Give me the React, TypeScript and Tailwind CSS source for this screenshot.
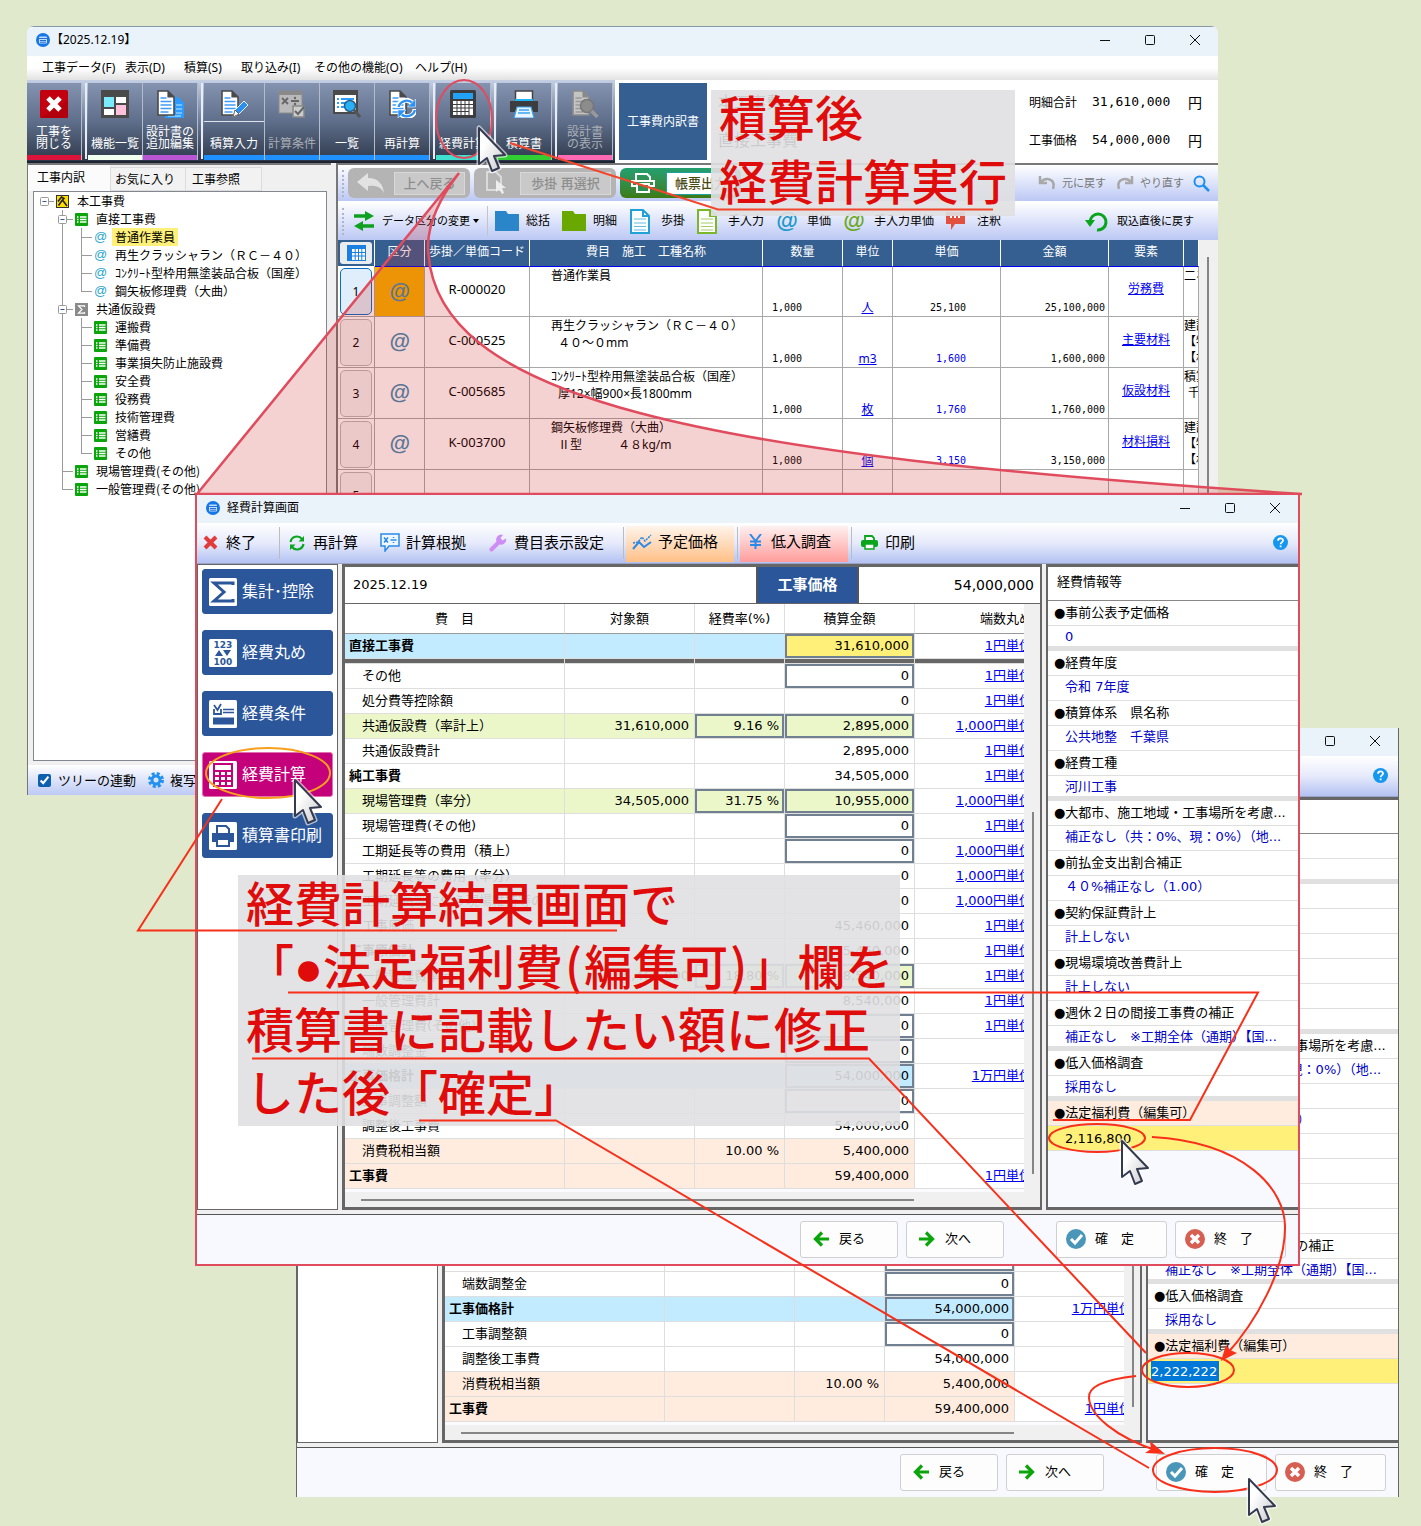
import React, { type ReactNode } from "react";

/* ---------- shared pieces ---------- */

function WindowControls() {
  return (
    <div className="mr-px ml-auto flex h-full">
      <button aria-label="最小化" className="flex w-[45px] items-center justify-center">
        <svg width="12" height="12" viewBox="0 0 12 12" stroke="#111" fill="none"><path d="M1 6.5h10" /></svg>
      </button>
      <button aria-label="最大化" className="flex w-[45px] items-center justify-center">
        <svg width="12" height="12" viewBox="0 0 12 12" stroke="#111" fill="none"><rect x="1.5" y="1.5" width="9" height="9" rx="1" /></svg>
      </button>
      <button aria-label="閉じる" className="flex w-[45px] items-center justify-center">
        <svg width="12" height="12" viewBox="0 0 12 12" stroke="#111" fill="none"><path d="M1 1l10 10M11 1L1 11" /></svg>
      </button>
    </div>
  );
}

function AppIcon() {
  return (
    <svg width="14" height="14" viewBox="0 0 14 14">
      <circle cx="7" cy="7" r="7" fill="#1676e8" />
      <rect x="3" y="3.5" width="8" height="7" rx="1" fill="#bfe0ff" />
      <path d="M3 5.5h8M4 7.5h6M4 9.2h6" stroke="#1660c8" strokeWidth=".9" />
    </svg>
  );
}

function Cursor({ x, y }: { x: number; y: number }) {
  return (
    <g transform={`translate(${x} ${y})`}>
      <path d="M0 0L0 36L8 30L13 43L20 40L15 28L26 27Z" fill="none" stroke="#ffffff" strokeOpacity=".6" strokeWidth="5" strokeLinejoin="round" />
      <path d="M0 0L0 36L8 30L13 43L20 40L15 28L26 27Z" fill="url(#cursorFill)" stroke="#343a50" strokeWidth="2" strokeLinejoin="round" />
    </g>
  );
}

/* ---------- main window: toolbar icons ---------- */

const IconClose = () => (
  <svg width="28" height="28" viewBox="0 0 28 28">
    <rect width="28" height="28" rx="1.5" fill="#c30010" />
    <path d="M0 28h28V10z" fill="#a8000c" opacity=".6" />
    <path d="M8 8l12 12M20 8L8 20" stroke="#fff" strokeWidth="5" />
  </svg>
);
const IconPanels = () => (
  <svg width="28" height="28" viewBox="0 0 28 28">
    <rect width="28" height="28" fill="#4a4a4a" />
    <rect x="3" y="7" width="10" height="10" fill="#7aeaff" />
    <rect x="15" y="7" width="10" height="6" fill="#fff" />
    <rect x="3" y="19" width="10" height="6" fill="#fff" />
    <rect x="15" y="15" width="10" height="10" fill="#ffc0da" />
  </svg>
);
const Page = ({ fill = "#fff", stroke = "#4a4a4a", line = "#3f9cf5" }: { fill?: string; stroke?: string; line?: string }) => (
  <g>
    <path d="M2 1h10l6 6v18H2z" fill={fill} stroke={stroke} strokeWidth="1.6" />
    <path d="M12 1v6h6" fill={stroke} stroke={stroke} strokeWidth="1.2" />
    <path d="M4.500 8h6M4.500 11.500h11M4.500 15h11M4.500 18.500h11M4.500 22h8" stroke={line} strokeWidth="1.4" />
  </g>
);
const IconPages = () => (
  <svg width="28" height="28" viewBox="0 0 28 28">
    <path d="M12 7h10l6 6v15H9V24h9V7z" fill="#2b9bff" />
    <path d="M20 15h6M20 19h6M12 26h13M20 23h6" stroke="#8fd0ff" strokeWidth="1.300" />
    <Page />
  </svg>
);
const IconPen = () => (
  <svg width="28" height="28" viewBox="0 0 28 28">
    <Page />
    <path d="M13 27l2-7L24 11l4 4-9 9z" fill="#2a8ff0" stroke="#e8f3ff" strokeWidth="1" />
    <path d="M13 27l2-7 4 4z" fill="#fff" stroke="#444" strokeWidth=".8" />
  </svg>
);
const IconCond = () => (
  <svg width="28" height="28" viewBox="0 0 28 28">
    <rect x="1" y="1" width="23" height="22" fill="#b9b9b9" stroke="#8c8c8c" />
    <rect x="1" y="1" width="23" height="4" fill="#8a8a8a" />
    <path d="M4 8l6 6M10 8l-6 6M13 11h8" stroke="#666" strokeWidth="1.800" />
    <circle cx="17" cy="8" r="1.200" fill="#666" /><circle cx="17" cy="14" r="1.200" fill="#666" />
    <rect x="15" y="16" width="11" height="11" fill="#ccc" stroke="#888" strokeWidth="1.500" />
    <path d="M17 21l3 3 6-7" fill="none" stroke="#666" strokeWidth="2" />
  </svg>
);
const IconSearchList = () => (
  <svg width="28" height="28" viewBox="0 0 28 28">
    <rect x="1" y="1" width="23" height="22" fill="#fff" stroke="#4a4a4a" strokeWidth="2" />
    <rect x="0" y="0" width="25" height="5" fill="#4a4a4a" />
    <path d="M4 9h2M4 13h2M4 17h2M8 9h13M8 13h6M8 17h5" stroke="#2b9bff" strokeWidth="2" />
    <circle cx="17" cy="16" r="5.500" fill="#29b0f5" stroke="#2a5e88" strokeWidth="1.500" />
    <path d="M21 20l6 7" stroke="#555" strokeWidth="3" />
  </svg>
);
const IconRecalc = () => (
  <svg width="28" height="28" viewBox="0 0 28 28">
    <Page />
    <path d="M10 18a8 8 0 0 1 14-5M27 19a8 8 0 0 1-14 5" fill="none" stroke="#ffffff" strokeWidth="5" />
    <path d="M10.500 17a8.500 8.500 0 0 1 14-4M27 20a8.500 8.500 0 0 1-14 4" fill="none" stroke="#2b93f5" strokeWidth="2.400" />
    <path d="M27.500 9v8h-8zM10 28v-8h8z" fill="#2b93f5" stroke="#dff0ff" strokeWidth=".6" />
  </svg>
);
const IconCalc = () => (
  <svg width="26" height="28" viewBox="0 0 26 28">
    <rect width="26" height="28" rx="1.500" fill="#3d3d40" />
    <rect x="3" y="3" width="20" height="6" fill="#22a2f5" />
    <rect x="3" y="11" width="20" height="14" fill="#fff" />
    <path d="M3 14.500h20M3 18h20M3 21.500h16M7 11v14M11 11v14M15 11v14M19 11v14" stroke="#3d3d40" strokeWidth="1" />
  </svg>
);
const IconPrinter = () => (
  <svg width="28" height="28" viewBox="0 0 28 28">
    <rect x="5.500" y="1" width="17" height="10" fill="#fff" stroke="#444" strokeWidth="1.500" />
    <rect x="5" y="9" width="18" height="3" fill="#1fb6f5" />
    <path d="M0 11h28v11h-5l-2-5H7l-2 5H0z" fill="#3d3d40" />
    <path d="M7 17h14l3 11H4z" fill="#eaf5ff" stroke="#38a2f0" strokeWidth="1.200" />
    <path d="M9 20h10M8 23h12" stroke="#38a2f0" strokeWidth="1.300" />
  </svg>
);
const IconPreview = () => (
  <svg width="28" height="28" viewBox="0 0 28 28">
    <Page fill="#c4c4c4" stroke="#8a8a8a" line="#999" />
    <circle cx="16" cy="16" r="6.500" fill="#8c8c8c" stroke="#777" strokeWidth="1.500" />
    <path d="M20.500 21l6 6" stroke="#999" strokeWidth="3.500" />
  </svg>
);

type Tool = { label: string[]; icon: ReactNode; bar: string; wide?: boolean; off?: boolean };
const toolGroups: Tool[][] = [
  [{ label: ["工事を", "閉じる"], icon: <IconClose />, bar: "bg-[#dc143c]" }],
  [
    { label: ["機能一覧"], icon: <IconPanels />, bar: "bg-[#f0fff0]" },
    { label: ["設計書の", "追加編集"], icon: <IconPages />, bar: "bg-[#ba55d3]" },
  ],
  [
    { label: ["積算入力"], icon: <IconPen />, bar: "bg-[#1e90ff]", wide: true },
    { label: ["計算条件"], icon: <IconCond />, bar: "bg-[#1e90ff]", off: true },
    { label: ["一覧"], icon: <IconSearchList />, bar: "bg-[#1e90ff]" },
    { label: ["再計算"], icon: <IconRecalc />, bar: "bg-[#1e90ff]" },
  ],
  [{ label: ["経費計算"], icon: <IconCalc />, bar: "bg-[#40e0d0]" }],
  [{ label: ["積算書"], icon: <IconPrinter />, bar: "bg-[#32cd32]" }],
  [{ label: ["設計書", "の表示"], icon: <IconPreview />, bar: "bg-[#ff69b4]", off: true }],
];

function ToolButton({ tool }: { tool: Tool }) {
  return (
    <button
      disabled={tool.off}
      className={`flex h-[77px] flex-col items-center border-r border-[#b4bccb] bg-linear-to-b from-[#8493b0] via-[#5f6f8b] to-[#303b4e] text-[12px] leading-[12px] ${tool.wide ? "w-[61px]" : "w-[55px]"} ${tool.off ? "text-[#a9adb5]" : "text-white"}`}
    >
      <span className="mt-[7px] block h-7">{tool.icon}</span>
      {tool.wide && <span className="mt-[3px] block h-px w-full bg-white/80" />}
      <span className="mt-auto mb-[5px] whitespace-nowrap">
        {tool.label.map((l) => (
          <span key={l} className="block">{l}</span>
        ))}
      </span>
      <span className={`block h-[5px] w-full shrink-0 ${tool.bar}`} />
    </button>
  );
}

/* ---------- main window: tree ---------- */

type Node = { text: string; level: 0 | 1 | 2; icon: "hammer" | "list" | "at" | "sigma"; open?: boolean; last?: boolean; selected?: boolean };
const tree: Node[] = [
  { text: "本工事費", level: 0, icon: "hammer", open: true },
  { text: "直接工事費", level: 1, icon: "list", open: true },
  { text: "普通作業員", level: 2, icon: "at", selected: true },
  { text: "再生クラッシャラン（ＲＣ－４０）", level: 2, icon: "at" },
  { text: "ｺﾝｸﾘｰﾄ型枠用無塗装品合板（国産）", level: 2, icon: "at" },
  { text: "鋼矢板修理費（大曲）", level: 2, icon: "at", last: true },
  { text: "共通仮設費", level: 1, icon: "sigma", open: true },
  { text: "運搬費", level: 2, icon: "list" },
  { text: "準備費", level: 2, icon: "list" },
  { text: "事業損失防止施設費", level: 2, icon: "list" },
  { text: "安全費", level: 2, icon: "list" },
  { text: "役務費", level: 2, icon: "list" },
  { text: "技術管理費", level: 2, icon: "list" },
  { text: "営繕費", level: 2, icon: "list" },
  { text: "その他", level: 2, icon: "list", last: true },
  { text: "現場管理費(その他)", level: 1, icon: "list" },
  { text: "一般管理費(その他)", level: 1, icon: "list", last: true },
];

function NodeIcon({ kind }: { kind: Node["icon"] }) {
  if (kind === "at") return <span aria-hidden className="w-[13px] text-center font-['Liberation_Sans',sans-serif] text-[13px] text-[#2aa5d0]">@</span>;
  return (
    <svg width="13" height="13" viewBox="0 0 13 13" className="shrink-0">
      {kind === "list" && (
        <g>
          <rect width="13" height="13" rx="1" fill="#0aa50a" />
          <path d="M2 4h1.500M2 6.500h1.500M2 9h1.500M5 4h6.500M5 6.500h6.500M5 9h6.500" stroke="#fff" strokeWidth="1.300" />
        </g>
      )}
      {kind === "sigma" && (
        <g>
          <rect width="13" height="13" fill="#8a8a8a" />
          <path d="M9.500 4V2.800h-6L7 6.500l-3.500 3.700h6V9" fill="none" stroke="#fff" strokeWidth="1.200" />
        </g>
      )}
      {kind === "hammer" && (
        <g>
          <rect x=".5" y=".5" width="12" height="12" fill="#ffdd00" stroke="#333" />
          <path d="M2 6.500L5.500 2l2.500 1.500L6.500 5l4.500 6M6 5.500L2.500 10.500" fill="none" stroke="#222" strokeWidth="1.600" />
        </g>
      )}
    </svg>
  );
}

function TreeRow({ node }: { node: Node }) {
  const width = 22 + node.level * 19;
  const boxX = node.level === 0 ? 10 : 28;
  return (
    <li className="flex h-[18px] items-center">
      <svg width={width} height="18" viewBox={`0 0 ${width} 18`} className="shrink-0" stroke="#9a9a9a" fill="none">
        {node.level === 1 && <path d={`M28.500 0V${node.last ? 9 : 18}M28 9.500H39`} />}
        {node.level === 2 && <path d={`M28.500 0V18M47.500 0V${node.last ? 9 : 18}M47 9.500H58`} />}
        {node.level === 0 && <path d="M10 9.500H20" />}
        {node.open && (
          <g>
            <rect x={boxX - 3.5} y="5.500" width="8" height="8" rx="1" fill="#fff" />
            <path d={`M${boxX - 1.500} 9.500h4`} stroke="#36549c" />
          </g>
        )}
      </svg>
      <NodeIcon kind={node.icon} />
      <span className={`ml-[5px] px-[3px] leading-[18px] whitespace-nowrap ${node.selected ? "bg-[#fff07a]" : ""}`}>{node.text}</span>
    </li>
  );
}

/* ---------- main window: right side ---------- */

const Folder = ({ color }: { color: string }) => (
  <svg width="24" height="20" viewBox="0 0 24 20"><path d="M0 0h11l2 3h11v17H0z" fill={color} /></svg>
);
const Doc = ({ color }: { color: string }) => (
  <svg width="20" height="25" viewBox="0 0 20 25">
    <path d="M1 1h12l6 6v17H1z" fill="#fff" stroke={color} strokeWidth="2" />
    <path d="M13 1v6h6" fill="none" stroke={color} strokeWidth="2" />
    <path d="M4 10h12M4 14h12M4 17.500h12M4 21h12" stroke={color} strokeWidth="1.100" opacity=".7" />
  </svg>
);
const At = ({ tone }: { tone: string }) => (
  <span aria-hidden className={`font-['Liberation_Sans',sans-serif] text-[22px] leading-[24px] font-bold italic ${tone}`}>@</span>
);

const ribbonItems: { label: string; icon: ReactNode; width: string }[] = [
  { label: "総括", icon: <Folder color="#2a86c8" />, width: "w-[67px]" },
  { label: "明細", icon: <Folder color="#68a800" />, width: "w-[68px]" },
  { label: "歩掛", icon: <Doc color="#22a0d8" />, width: "w-[67px]" },
  { label: "手入力", icon: <Doc color="#7ab82a" />, width: "w-[79px]" },
  { label: "単価", icon: <At tone="text-[#1a96cc]" />, width: "w-[67px]" },
  { label: "手入力単価", icon: <At tone="text-[#6aa81a]" />, width: "w-[103px]" },
  {
    label: "注釈",
    icon: (
      <svg width="20" height="20" viewBox="0 0 20 20">
        <path d="M0 1h19v12H9l-4 6v-6H0z" fill="#e2513f" />
        <path d="M4 6h2M8 6h2M12 6h2" stroke="#fff" strokeWidth="2" />
      </svg>
    ),
    width: "w-[60px]",
  },
];

const Grip = () => <span className="mx-1 h-[27px] w-0 border-l-2 border-dotted border-[#b0b4c4]" />;

function BadgeButton({ label, icon, tone, text, off }: { label: string; icon: ReactNode; tone: string; text: string; off?: boolean }) {
  return (
    <button disabled={off} className={`flex h-[30px] items-center rounded-[6px] pr-[5px] ${tone}`}>
      <span className="flex w-[46px] justify-center">{icon}</span>
      <span className={`flex h-[23px] items-center justify-center border text-[13px] font-medium whitespace-nowrap ${text}`}>{label}</span>
    </button>
  );
}

const gridRows = [
  { no: 1, code: "R-000020", name: ["普通作業員"], unit: "人", price: "25,100", amount: "25,100,000", kind: "労務費", memo: ["二ネ"] },
  { no: 2, code: "C-000525", name: ["再生クラッシャラン（ＲＣ－４０）", "４０～０mm"], unit: "m3", price: "1,600", amount: "1,600,000", kind: "主要材料", memo: ["建設", "【特", "【材"] },
  { no: 3, code: "C-005685", name: ["ｺﾝｸﾘｰﾄ型枠用無塗装品合板（国産）", "厚12×幅900×長1800mm"], unit: "枚", price: "1,760", amount: "1,760,000", kind: "仮設材料", memo: ["積算", "千"] },
  { no: 4, code: "K-003700", name: ["鋼矢板修理費（大曲）", "Ⅱ型　　　４８kg/m"], unit: "個", price: "3,150", amount: "3,150,000", kind: "材料損料", memo: ["建設", "【特", "【材"] },
];

function DetailGrid() {
  const th = "h-[26px] border-r border-white pb-[4px] font-normal";
  const td = "border-r border-b border-[#a8a8a8] p-0";
  return (
    <div className="flex bg-white">
      <div className="min-w-0 flex-1 overflow-hidden">
        <table className="w-full table-fixed border-separate border-spacing-0 text-[12px] leading-[17px]">
          <colgroup>
            <col className="w-[37px]" /><col className="w-[50px]" /><col className="w-[105px]" /><col className="w-[233px]" /><col className="w-[80px]" />
            <col className="w-[50px]" /><col className="w-[108px]" /><col className="w-[108px]" /><col className="w-[75px]" /><col />
          </colgroup>
          <thead>
            <tr className="bg-[#365f91] whitespace-nowrap text-white">
              <th className="h-[26px] border-r border-white p-[2px]">
                <span className="flex h-[22px] items-center justify-center rounded-[3px] bg-[#e9ecef]">
                  <svg width="19" height="16" viewBox="0 0 19 16">
                    <rect width="19" height="16" fill="#1a7fe0" />
                    <path d="M5 4h13v11H5z" fill="#fff" />
                    <path d="M5 7.500h13M5 11h13M8.200 4v11M11.500 4v11M14.800 4v11" stroke="#1a7fe0" />
                  </svg>
                </span>
              </th>
              <th className={th}>区分</th><th className={th}>歩掛／単価コード</th><th className={th}>費目　施工　工種名称</th><th className={th}>数量</th>
              <th className={th}>単位</th><th className={th}>単価</th><th className={th}>金額</th><th className={th}>要素</th><th className={th}></th>
            </tr>
          </thead>
          <tbody>
            {gridRows.map((r) => {
              const line = r.no === 1 ? "border-t border-t-[#0000f0]" : "";
              return (
                <tr key={r.no} className="h-[51px]">
                  <td className={`${td} px-[2px]`}>
                    <span className={`flex h-[47px] items-center justify-center rounded-[5px] border ${r.no === 1 ? "border-[#0a6cc0] bg-[#dfeefa]" : "border-[#b8b8b8] bg-[#f4f4f4]"}`}>{r.no}</span>
                  </td>
                  <td className={`${td} ${line} pb-[2px] text-center ${r.no === 1 ? "bg-[#f5b200]" : ""}`}>
                    <span aria-hidden className="font-['Liberation_Sans',sans-serif] text-[21px] leading-[24px] font-bold text-[#3c8cb4] italic">@</span>
                  </td>
                  <td className={`${td} ${line} pb-[4px] text-center text-[13px]`}>{r.code}</td>
                  <td className={`${td} ${line} pl-[21px] align-top text-[12px] whitespace-nowrap`}>
                    {r.name.map((n, i) => <span key={n} className={`block ${i ? "pl-[7px]" : ""}`}>{n}</span>)}
                  </td>
                  <td className={`${td} ${line} pl-[9px] align-bottom font-['DejaVu_Sans_Mono',monospace] text-[10px]`}>1,000</td>
                  <td className={`${td} ${line} text-center align-bottom`}><a href="#unit" className="text-[#0000f0] underline">{r.unit}</a></td>
                  <td className={`${td} ${line} pr-[34px] text-right align-bottom font-['DejaVu_Sans_Mono',monospace] text-[10px] ${r.no === 1 ? "" : "text-[#0000f0]"}`}>{r.price}</td>
                  <td className={`${td} ${line} pr-[3px] text-right align-bottom font-['DejaVu_Sans_Mono',monospace] text-[10px]`}>{r.amount}</td>
                  <td className={`${td} ${line} pb-[6px] text-center`}><a href="#kind" className="text-[#0000f0] underline">{r.kind}</a></td>
                  <td className={`${td} ${line} overflow-hidden align-top whitespace-nowrap`}>
                    {r.memo.map((m) => <span key={m} className={`block h-[16px] ${m === "千" ? "pl-[4px]" : ""}`}>{m}</span>)}
                  </td>
                </tr>
              );
            })}
            <tr className="h-[51px]">
              <td className={`${td} px-[2px]`}><span className="flex h-[47px] items-center justify-center rounded-[5px] border border-[#b8b8b8] bg-[#f4f4f4]">5</span></td>
              {["a", "b", "c", "d", "e", "f", "g", "h", "i"].map((k) => <td key={k} className={td}></td>)}
            </tr>
          </tbody>
        </table>
      </div>
      <div className="flex w-[19px] bg-[#f0f0f0] pt-[17px] pl-2"><span className="w-[2px] bg-[#858585]" /></div>
    </div>
  );
}

function MainWindow() {
  const menus: [string, string][] = [
    ["工事データ(F)", "w-[83px]"], ["表示(D)", "w-[59px]"], ["積算(S)", "w-[57px]"], ["取り込み(I)", "w-[73px]"], ["その他の機能(O)", "w-[101px]"], ["ヘルプ(H)", "w-[60px]"],
  ];
  return (
    <section aria-label="積算" className="mt-[26px] mr-[203px] ml-[27px] flex min-w-0 flex-col self-start overflow-hidden rounded-t-[7px] bg-[#f0f0f0] font-['Noto_Sans','Noto_Sans_CJK_JP',sans-serif] text-[12px] leading-[18px] text-black [grid-area:1/1]">
      <header className="flex h-[30px] items-center border-t border-[#8698a8] bg-[#ebf3fa] pb-[3px] pl-[9px]">
        <AppIcon />
        <span className="ml-px">【2025.12.19】</span>
        <WindowControls />
      </header>
      <nav className="flex h-6 items-center bg-linear-to-b from-white via-white to-[#e2e2e2] pl-[15px]">
        {menus.map(([m, w]) => <button key={m} className={`text-left whitespace-nowrap ${w}`}>{m}</button>)}
      </nav>
      <div className="flex h-[83px] bg-white">
        <div className="flex shrink-0 items-start border-b-2 border-[#1c2433] bg-linear-to-b from-[#c4cfe4] via-[#6d7d9b] to-[#2c3648] pt-[3px] pr-[2px]">
          {toolGroups.map((g, i) => (
            <div key={i} className="flex">
              {i > 0 && <span className="mr-px ml-[3px] h-[76px] w-[2px] bg-[#e8ecf4]" />}
              {g.map((t) => <ToolButton key={t.label.join("")} tool={t} />)}
            </div>
          ))}
        </div>
        <div className="mt-[3px] ml-1 flex h-[77px] w-[88px] shrink-0 items-center justify-center bg-[#365f91] text-white">工事費内訳書</div>
        <div className="flex flex-1 flex-col gap-5 pt-[12px] pl-[11px] font-['Noto_Sans_CJK_JP',sans-serif] text-[16px]">
          <span>本工事費</span>
          <span>直接工事費</span>
        </div>
        <dl className="grid grid-cols-[63px_96px_30px] content-start gap-y-5 pt-[13px] font-['Noto_Sans_CJK_JP',sans-serif]">
          <dt>明細合計</dt><dd className="font-['DejaVu_Sans_Mono',monospace] text-[13px]">31,610,000</dd><dd className="text-[14px]">円</dd>
          <dt>工事価格</dt><dd className="font-['DejaVu_Sans_Mono',monospace] text-[13px]">54,000,000</dd><dd className="text-[14px]">円</dd>
        </dl>
      </div>
      <div className="flex">
        <div className="flex w-[304px] shrink-0 flex-col border-t-2 border-l border-[#777] font-['Noto_Sans_CJK_JP',sans-serif]">
          <div role="tablist" className="flex h-[26px] items-end">
            <button role="tab" aria-selected="true" className="h-full w-[82px] bg-[#fbfbfb] pb-[3px] pl-[9px] text-left">工事内訳</button>
            <button role="tab" aria-selected="false" className="h-6 w-[76px] border border-[#dcdcdc] bg-[#f2f2f2] pl-1 text-left">お気に入り</button>
            <button role="tab" aria-selected="false" className="h-6 w-[76px] border border-l-0 border-[#dcdcdc] bg-[#f2f2f2] pl-[6px] text-left">工事参照</button>
          </div>
          <ul className="mr-1 ml-[5px] min-h-[570px] border border-[#828790] bg-white">
            {tree.map((n) => <TreeRow key={n.text} node={n} />)}
          </ul>
          <div className="mt-1 flex h-[30px] items-center bg-linear-to-b from-white to-[#bcc9f4] pl-[10px] text-[13px]">
            <label className="flex items-center gap-[7px]">
              <input type="checkbox" defaultChecked className="h-[13px] w-[13px] accent-[#0f5fb0]" />
              ツリーの連動
            </label>
            <svg width="16" height="16" viewBox="0 0 16 16" className="ml-3">
              <circle cx="8" cy="8" r="6.500" fill="none" stroke="#2190ee" strokeWidth="3" strokeDasharray="3 2.100" />
              <circle cx="8" cy="8" r="4" fill="none" stroke="#2190ee" strokeWidth="3" />
            </svg>
            <button className="ml-[6px]">複写</button>
          </div>
        </div>
        <div className="ml-[5px] flex min-w-0 flex-1 flex-col border-t-2 border-l-2 border-[#777] bg-white">
          <div className="flex h-[36px] items-center bg-linear-to-b from-white to-[#bcc8f4]">
            <Grip />
            <BadgeButton
              off label="上へ戻る" tone="bg-[#b4b4b4]" text="w-[71px] border-[#d8d8d8] bg-[#c9c9c9] text-[#8e8e8e]"
              icon={<svg width="28" height="20" viewBox="0 0 28 20"><path d="M0 9L11 0v5c10 0 15 6 16 15-3-6-8-8-16-7v5z" fill="#e2e2e2" /></svg>}
            />
            <span className="w-[4px]" />
            <BadgeButton
              off label="歩掛 再選択" tone="bg-[#b4b4b4]" text="w-[91px] border-[#d8d8d8] bg-[#c9c9c9] text-[#8e8e8e]"
              icon={<svg width="22" height="24" viewBox="0 0 22 24"><path d="M1 1h9l5 5v13H1z" fill="none" stroke="#dadada" strokeWidth="2" /><path d="M10 9v12l3-3 3 5 2-1-2-5h4z" fill="#eee" /></svg>}
            />
            <span className="w-[4px]" />
            <BadgeButton
              label="帳票出力" tone="bg-linear-to-b from-[#22a070] to-[#3c7a10]" text="w-[70px] border-[#22a0a0] bg-white text-[#4a4a10]"
              icon={<svg width="24" height="20" viewBox="0 0 24 20" fill="none" stroke="#fff" strokeWidth="2"><path d="M5 7V1h11l3 3v3M5 13H1V8h22v5h-4" /><path d="M6 11h12v8H6z" fill="#2c9050" /></svg>}
            />
            <div className="ml-auto flex items-center pr-2 text-[11px] text-[#777]">
              <svg width="18" height="16" viewBox="0 0 18 16"><path d="M2 1v7h7M2 8C8 1 18 4 15 14" fill="none" stroke="#a8a8a8" strokeWidth="2.500" /></svg>
              <span className="ml-[6px]">元に戻す</span>
              <svg width="18" height="16" viewBox="0 0 18 16" className="ml-[10px]"><path d="M16 1v7H9M16 8C10 1 0 4 3 14" fill="none" stroke="#a8a8a8" strokeWidth="2.500" /></svg>
              <span className="ml-[6px]">やり直す</span>
              <svg width="17" height="17" viewBox="0 0 17 17" className="ml-[9px]" fill="none" stroke="#1e8ff0"><circle cx="6.500" cy="6.500" r="5" strokeWidth="2" /><path d="M10 10l6 6" strokeWidth="2.500" /></svg>
            </div>
          </div>
          <div className="mt-px flex h-[38px] items-center bg-linear-to-b from-white to-[#bcc8f4]">
            <Grip />
            <button className="ml-[6px] flex items-center gap-2 text-[11px] whitespace-nowrap">
              <svg width="20" height="20" viewBox="0 0 20 20"><path d="M0 5h12M8 15h12" stroke="#10a020" strokeWidth="3.500" /><path d="M11 0l9 5-9 5zM9 10l-9 5 9 5z" fill="#10a020" /></svg>
              <span>データ区分の変更</span>
            </button>
            <svg width="6" height="4" viewBox="0 0 6 4" className="ml-[3px]"><path d="M0 0h6L3 4z" /></svg>
            <span className="mr-[7px] ml-2 h-[30px] w-px bg-[#c4c4c4]" />
            {ribbonItems.map((r) => (
              <button key={r.label} className={`flex shrink-0 items-center ${r.width}`}>
                <span className="flex w-6">{r.icon}</span>
                <span className="ml-[7px] whitespace-nowrap">{r.label}</span>
              </button>
            ))}
            <button className="mr-6 ml-auto flex items-center gap-2 text-[11px] whitespace-nowrap">
              <svg width="24" height="22" viewBox="0 0 24 22"><path d="M5 12a8 8 0 1 1 7 8" fill="none" stroke="#0aa51e" strokeWidth="3" /><path d="M0 10h10l-5 7z" fill="#0aa51e" /></svg>
              取込直後に戻す
            </button>
          </div>
          <DetailGrid />
        </div>
      </div>
    </section>
  );
}

/* ---------- cost calculation window ---------- */

const sideButtons: { label: string; icon: ReactNode; active?: boolean }[] = [
  { label: "集計･控除", icon: <path d="M24 7V5H5l10 9L5 23h19v-2" fill="none" stroke="#2b579a" strokeWidth="3" /> },
  {
    label: "経費丸め",
    icon: (
      <g fill="#2b579a" fontFamily="DejaVu Sans" fontWeight="700" fontSize="9" textAnchor="middle">
        <text x="14" y="9">123</text><text x="14" y="26">100</text>
        <path d="M6 17l4-6 4 6zM14 11h8l-4 6z" />
      </g>
    ),
  },
  {
    label: "経費条件",
    icon: <g stroke="#2b579a" fill="none" strokeWidth="1.800"><path d="M5 5l3.500 5L12 4M5 9v5h7V9" /><path d="M14 9.500h11M14 12.500h11" strokeWidth="1.500" /><path d="M4 17.500h21v7H4z" fill="#2b579a" stroke="none" /></g>,
  },
  {
    label: "経費計算",
    active: true,
    icon: <g fill="none" stroke="#c4007a" strokeWidth="2"><path d="M5 3h18v22H5zM5 10h18M5 15h18M5 20h18M11 10v15M17 10v15" /></g>,
  },
  {
    label: "積算書印刷",
    icon: <g><path d="M3 11h22v9h-4v-4H7v4H3z" fill="#2b579a" /><path d="M8 11V4h9l3 3v4M8 17h12v7H8z" fill="#fff" stroke="#2b579a" strokeWidth="2" /></g>,
  },
];

type Tone = "white" | "blue" | "green" | "peach";
type CostRow = { name: string; head?: boolean; base?: string; rate?: string; amount: string; unit?: string; tone?: Tone; box?: boolean; yellow?: boolean };
const costRows: CostRow[] = [
  { name: "その他", amount: "0", unit: "1円単位", box: true },
  { name: "処分費等控除額", amount: "0", unit: "1円単位" },
  { name: "共通仮設費（率計上）", base: "31,610,000", rate: "9.16 %", amount: "2,895,000", unit: "1,000円単位", tone: "green", box: true },
  { name: "共通仮設費計", amount: "2,895,000", unit: "1円単位" },
  { name: "純工事費", head: true, amount: "34,505,000", unit: "1円単位" },
  { name: "現場管理費（率分）", base: "34,505,000", rate: "31.75 %", amount: "10,955,000", unit: "1,000円単位", tone: "green", box: true },
  { name: "現場管理費(その他)", amount: "0", unit: "1円単位", box: true },
  { name: "工期延長等の費用（積上）", amount: "0", unit: "1,000円単位", box: true },
  { name: "工期延長等の費用（率分）", amount: "0", unit: "1,000円単位" },
  { name: "工期延長等に伴う現場維持等の", amount: "0", unit: "1,000円単位" },
  { name: "工事原価", amount: "45,460,000", unit: "1円単位" },
  { name: "工事原価計", head: true, amount: "45,460,000", unit: "1円単位" },
  { name: "一般管理費率分", base: "45,460,000", rate: "18.80 %", amount: "8,540,000", unit: "1円単位", tone: "green", box: true },
  { name: "一般管理費計", amount: "8,540,000", unit: "1円単位" },
  { name: "一般管理費(その他)", amount: "0", unit: "1円単位", box: true },
  { name: "端数調整金", amount: "0", box: true },
  { name: "工事価格計", head: true, amount: "54,000,000", unit: "1万円単位", tone: "blue", box: true },
  { name: "工事調整額", amount: "0", box: true },
  { name: "調整後工事費", amount: "54,000,000" },
  { name: "消費税相当額", rate: "10.00 %", amount: "5,400,000", tone: "peach" },
  { name: "工事費", head: true, amount: "59,400,000", unit: "1円単位", tone: "peach" },
];
const toneClass: Record<Tone, string> = { white: "bg-white", blue: "bg-[#c3ebff]", green: "bg-[#ebf7c8]", peach: "bg-[#ffecdf]" };

function CostLine({ row }: { row: CostRow }) {
  const bg = toneClass[row.tone ?? "white"];
  const td = "h-[25px] border-r border-b border-[#dedede] p-0";
  const field = "block h-6 w-full border-2 border-[#708090] pr-[3px] pb-px text-right outline-none";
  return (
    <tr>
      <td className={`${td} ${bg} whitespace-nowrap ${row.head ? "pl-1 font-bold" : "pl-[17px]"}`}>{row.name}</td>
      <td className={`${td} ${bg} pr-[5px] text-right`}>{row.base}</td>
      <td className={`${td} ${bg} ${row.rate && row.box ? "" : "pr-[5px]"} text-right`}>
        {row.rate && row.box ? <input aria-label={`${row.name} 経費率`} className={`${field} ${bg}`} defaultValue={row.rate} /> : row.rate}
      </td>
      <td className={`${td} ${bg} ${row.box ? "" : "pr-[5px]"} text-right`}>
        {row.box ? <input aria-label={`${row.name} 積算金額`} className={`${field} ${row.yellow ? "bg-[#fff07a]" : bg}`} defaultValue={row.amount} /> : row.amount}
      </td>
      <td className="h-[25px] border-b border-[#dedede] bg-white py-0 pr-1 pl-0 text-right whitespace-nowrap">
        {row.unit && <a href="#rounding" className="text-[#0000f0] underline">{row.unit}</a>}
      </td>
    </tr>
  );
}

const infoItems: { label: string; value: string; end?: boolean }[] = [
  { label: "事前公表予定価格", value: "0", end: true },
  { label: "経費年度", value: "令和 7年度" },
  { label: "積算体系　県名称", value: "公共地整　千葉県" },
  { label: "経費工種", value: "河川工事", end: true },
  { label: "大都市、施工地域・工事場所を考慮...", value: "補正なし（共：0%、現：0%）（地..." },
  { label: "前払金支出割合補正", value: "４０%補正なし（1.00）" },
  { label: "契約保証費計上", value: "計上しない" },
  { label: "現場環境改善費計上", value: "計上しない" },
  { label: "週休２日の間接工事費の補正", value: "補正なし　※工期全体（通期）【国...", end: true },
  { label: "低入価格調査", value: "採用なし", end: true },
];

const Sep = () => <span className="h-8 w-px shrink-0 bg-[#bcbcbc]" />;

const RoundIcon = ({ ok }: { ok?: boolean }) => (
  <svg width="20" height="20" viewBox="0 0 20 20">
    <circle cx="10" cy="10" r="10" fill={ok ? "#4a96b8" : "#d65f52"} />
    {ok ? <path d="M5 10l4 4 7-8" fill="none" stroke="#fff" strokeWidth="3" /> : <path d="M6 6l8 8M14 6l-8 8" stroke="#fff" strokeWidth="3.500" />}
  </svg>
);
const Arrow = ({ back }: { back?: boolean }) => (
  <svg width="16" height="16" viewBox="0 0 16 16" fill="none" stroke="#0aa50a" strokeWidth="3.200">
    {back ? <path d="M9 1.500L2.500 8 9 14.500M2.500 8H16" /> : <path d="M7 1.500L13.500 8 7 14.500M13.500 8H0" />}
  </svg>
);

function CalcWindow({ welfareCost, editing }: { welfareCost: string; editing?: boolean }) {
  const tool = "flex h-full shrink-0 items-center whitespace-nowrap";
  const foot = "flex h-[37px] items-center rounded-[3px] border border-[#cfcfcf] bg-[#fdfdfd] pb-[2px] whitespace-pre";
  return (
    <div className="flex min-w-0 flex-col bg-[#f0f0f0] font-['DejaVu_Sans','Noto_Sans_CJK_JP',sans-serif] text-[13px] leading-[18px] text-black">
      <header className="flex h-7 items-center bg-[#ebf3fa] pb-[3px] pl-[9px] text-[12px]">
        <AppIcon />
        <span className="ml-[7px]">経費計算画面</span>
        <WindowControls />
      </header>
      <div className="flex h-[41px] items-center border-b border-[#9aa4c8] bg-linear-to-b from-white via-[#e6eafb] to-[#b4c2f2] pb-px text-[15px]">
        <button className={`${tool} ml-[6px] w-[76px] gap-2`}>
          <svg width="15" height="15" viewBox="0 0 15 15"><path d="M2 2l11 11M13 2L2 13" stroke="#e03c3c" strokeWidth="4" /></svg>終了
        </button>
        <Sep />
        <button className={`${tool} ml-[9px] w-[91px] gap-2`}>
          <svg width="16" height="16" viewBox="0 0 16 16" fill="none" stroke="#0aa51e" strokeWidth="2.200"><path d="M1.500 7A6.500 6.500 0 0 1 13 4M14.500 9A6.500 6.500 0 0 1 3 12" /><path d="M15 1v5.500H9.500zM1 15V9.500h5.500z" fill="#0aa51e" stroke="none" /></svg>再計算
        </button>
        <button className={`${tool} w-[109px] gap-[6px]`}>
          <svg width="20" height="19" viewBox="0 0 20 19" fill="none" stroke="#2a8ae8" strokeWidth="1.500"><path d="M1 1h18v12H9l-4 5v-5H1z" fill="#eef6ff" /><path d="M4 4.500l4 5M8 4.500l-4 5M10.500 7h6M13.500 4v1M13.500 9v1" /></svg>計算根拠
        </button>
        <button className={`${tool} w-[134px] gap-[7px]`}>
          <svg width="18" height="18" viewBox="0 0 18 18"><path d="M2.500 15.500L10 8" stroke="#cf8cf5" strokeWidth="4" strokeLinecap="round" /><path d="M17 4.500l-3.500 2L11.500 4l2.500-3a5 5 0 1 0 3 3.500z" fill="#cf8cf5" /></svg>費目表示設定
        </button>
        <Sep />
        <button className="ml-[2px] flex h-[36px] w-[108px] shrink-0 items-center gap-[6px] self-end bg-linear-to-b from-[#fff4ea] to-[#ffbf86] pb-[5px] pl-[6px] whitespace-nowrap">
          <svg width="20" height="16" viewBox="0 0 20 16" fill="none" stroke="#2a8ae8" strokeWidth="1.600"><path d="M1 15l6-7 5 5 7-5" strokeWidth="2" /><path d="M1 9l5-1 4-5 3 4 6-6" strokeDasharray="2 1" /></svg>予定価格
        </button>
        <span className="w-[3px]" />
        <Sep />
        <button className="ml-[2px] flex h-[36px] w-[108px] shrink-0 items-center gap-[9px] self-end bg-linear-to-b from-[#fff0f0] to-[#ff9c9c] pb-[5px] pl-[9px] whitespace-nowrap">
          <svg width="13" height="15" viewBox="0 0 13 15" fill="none" stroke="#2a8ae8" strokeWidth="2"><path d="M1 0l5.500 7L12 0M6.500 7v8M1 7.500h11M1 11h11" /></svg>低入調査
        </button>
        <span className="w-[3px]" />
        <Sep />
        <button className={`${tool} ml-[9px] gap-[7px]`}>
          <svg width="17" height="15" viewBox="0 0 17 15"><path d="M4 5V1h7l2 2v2" fill="#fff" stroke="#0aa51e" strokeWidth="1.800" /><rect y="5" width="17" height="7" rx="2" fill="#0aa51e" /><rect x="4" y="9" width="9" height="5" fill="#fff" stroke="#0aa51e" strokeWidth="1.500" /></svg>印刷
        </button>
        <button aria-label="ヘルプ" className="mr-[10px] ml-auto">
          <svg width="15" height="15" viewBox="0 0 15 15"><circle cx="7.500" cy="7.500" r="7.500" fill="#1597f0" /><path d="M5 5.800C5 2.500 10 2.600 10 5.600c0 1.800-2.400 1.800-2.400 3.600M7.600 10.600v1.600" fill="none" stroke="#fff" strokeWidth="1.800" /></svg>
        </button>
      </div>

      <div className="flex">
        <aside className="flex w-[141px] shrink-0 flex-col gap-4 border border-[#666] bg-white p-1">
          {sideButtons.map((b) => (
            <button key={b.label} className={`flex h-[45px] items-center rounded-[3px] border pl-[6px] text-[16px] whitespace-nowrap text-white ${b.active ? "border-[#e070b0] bg-[#c4007a]" : "border-[#2b579a] bg-[#2b579a]"}`}>
              <svg width="28" height="28" viewBox="0 0 28 28" className="shrink-0"><rect width="28" height="28" rx="1.500" fill="#fff" />{b.icon}</svg>
              <span className="ml-[5px]">{b.label}</span>
            </button>
          ))}
        </aside>

        <div className="ml-1 flex min-w-0 flex-1 flex-col border-t-[3px] border-r-2 border-b-[3px] border-l-[3px] border-[#666]">
          <div className="flex h-[37px] items-center border-b border-[#666] bg-white">
            <span className="flex-1 pl-2">2025.12.19</span>
            <span className="flex h-full w-[103px] items-center justify-center border-x-2 border-[#555] bg-[#2b579a] text-[15px] font-bold text-white">工事価格</span>
            <span className="w-[181px] pr-[6px] text-right text-[14px]">54,000,000</span>
          </div>
          <div className="flex">
            <div className="min-w-0 flex-1 overflow-hidden bg-[#fbfbff] pb-[3px]">
              <table className="w-[calc(100%+12px)] table-fixed border-separate border-spacing-0">
                <colgroup><col className="w-[220px]" /><col className="w-[130px]" /><col className="w-[90px]" /><col className="w-[130px]" /><col /></colgroup>
                <thead>
                  <tr className="bg-white whitespace-nowrap">
                    <th className="h-[30px] border-r border-b border-r-[#dedede] border-b-[#999] p-0 font-normal">費　目</th>
                    <th className="border-r border-b border-r-[#dedede] border-b-[#999] p-0 font-normal">対象額</th>
                    <th className="border-r border-b border-r-[#dedede] border-b-[#999] p-0 font-normal">経費率(%)</th>
                    <th className="border-r border-b border-r-[#dedede] border-b-[#999] p-0 font-normal">積算金額</th>
                    <th className="border-b border-[#999] p-0 pr-1 text-right font-normal">端数丸め</th>
                  </tr>
                </thead>
                <tbody>
                  <CostLine row={{ name: "直接工事費", head: true, amount: "31,610,000", unit: "1円単位", tone: "blue", box: true, yellow: true }} />
                  <tr>
                    {["a", "b", "c", "d", "e"].map((k) => <td key={k} className="h-[5px] border-r border-b border-[#dedede] bg-[#666] p-0"></td>)}
                  </tr>
                  {costRows.map((r) => <CostLine key={r.name} row={r} />)}
                </tbody>
              </table>
            </div>
            <div className="flex w-4 shrink-0 items-end pb-[18px] pl-2"><span className="h-[362px] w-[2px] bg-[#858585]" /></div>
          </div>
          <div className="flex h-[15px] items-center pl-4"><span className="h-[2px] w-[553px] bg-[#858585]" /></div>
        </div>

        <div className="ml-1 flex w-[252px] shrink-0 flex-col border-t-[3px] border-b-[3px] border-l-2 border-[#666] bg-[#f8f9ff]">
          <h2 className="flex h-[34px] items-center border-b border-[#888] bg-white pb-[3px] pl-[9px]">経費情報等</h2>
          <dl className="whitespace-nowrap">
            {infoItems.map((it) => (
              <React.Fragment key={it.label}>
                <dt className="h-[25px] border-b border-[#dedede] bg-white pt-[3px] pl-[6px]">●{it.label}</dt>
                <dd className={`h-[25px] border-[#e0e0e0] bg-white pt-[2px] pl-[17px] text-[#0000c8] ${it.end ? "border-b-[5px] leading-[17px]" : "border-b"}`}>{it.value}</dd>
              </React.Fragment>
            ))}
            <dt className="h-[25px] border-b border-[#dedede] bg-[#ffecdf] pt-[3px] pl-[6px]">●法定福利費（編集可）</dt>
            <dd className={`flex h-[25px] items-center border-b border-[#dedede] bg-[#fff07a] ${editing ? "pl-[3px]" : "pl-[17px]"}`}>
              <input aria-label="法定福利費" defaultValue={welfareCost} className={`h-5 w-[68px] outline-none ${editing ? "bg-[#0078d7] text-white" : "bg-transparent"}`} />
            </dd>
          </dl>
        </div>
      </div>

      <footer className="mt-1 flex h-[50px] items-start border-t border-[#555] bg-[#f8f9ff] pt-[6px] pr-3">
        <button className={`${foot} ml-auto w-[98px] pl-3`}><Arrow back /><span className="ml-[10px]">戻る</span></button>
        <button className={`${foot} ml-2 w-[98px] pl-3`}><Arrow /><span className="ml-[10px]">次へ</span></button>
        <button className={`${foot} ml-[52px] w-[111px] pl-[9px]`}><RoundIcon ok /><span className="ml-[9px]">確　定</span></button>
        <button className={`${foot} ml-2 w-[111px] pl-[9px]`}><RoundIcon /><span className="ml-[9px]">終　了</span></button>
      </footer>
    </div>
  );
}

/* ---------- annotations drawn over the windows ---------- */

function Annotations() {
  return (
    <svg width="1421" height="1526" viewBox="0 0 1421 1526" fill="none" className="pointer-events-none absolute top-0 left-0">
      <defs>
        <linearGradient id="cursorFill" x1="0" y1="0" x2="1" y2="1">
          <stop offset=".3" stopColor="#ffffff" /><stop offset="1" stopColor="#c8c8cc" />
        </linearGradient>
      </defs>
      <ellipse cx="464" cy="119" rx="28" ry="39" stroke="#e04c5e" strokeWidth="2" />
      <path d="M510 143L718 209.500H993" stroke="#f2472c" strokeWidth="2" />
      <ellipse cx="268" cy="773" rx="62" ry="25" stroke="#f8a01c" strokeWidth="2" />
      <g stroke="#f8301a" strokeWidth="2">
        <path d="M222 799L138 930.500H617" />
        <path d="M288 992.500H1258L1190 1120H1053" />
        <path d="M252 1058.500H869L1146 1353" />
        <path d="M419 1120.500H556L1149 1468" />
        <ellipse cx="1097" cy="1138" rx="48" ry="14" />
        <path d="M1152 1137C1245 1142 1286 1190 1285 1228C1285 1270 1256 1322 1226 1355" />
        <ellipse cx="1188" cy="1370" rx="46" ry="17" />
        <path d="M1136 1376C1100 1380 1088 1388 1089 1398C1090 1415 1115 1437 1158 1451" />
        <ellipse cx="1215" cy="1470" rx="62" ry="22" />
      </g>
      <path d="M1221 1361L1226 1345L1230 1350L1237 1353Z M1165 1454L1145 1453L1151 1449L1150 1441Z" fill="#f8301a" />
      <Cursor x={479} y={128} />
      <Cursor x={295} y={780} />
      <Cursor x={1122} y={1141} />
      <Cursor x={1249} y={1479} />
    </svg>
  );
}

export default function App() {
  return (
    <main className="relative grid min-w-[1421px] grid-cols-1 bg-[#e0e9cb] pb-[30px] font-['Noto_Sans_CJK_JP',sans-serif]">
      <MainWindow />
      <section aria-label="経費計算画面 編集中" className="mt-[728px] mr-[22px] ml-[296px] min-w-0 self-start border-x border-[#666] [grid-area:1/1]">
        <CalcWindow welfareCost="2,222,222" editing />
      </section>
      <svg width="1421" height="500" viewBox="0 0 1421 500" className="pointer-events-none absolute top-0 left-0">
        <path d="M197 494L459 173Q429 212 428 245C429 400 700 455 1302 494Z" fill="#c81e1e" fillOpacity=".2" stroke="#e04c5e" strokeWidth="2.500" />
      </svg>
      <section aria-label="経費計算画面" className="z-0 mt-[493px] mr-[121px] ml-[195px] min-w-0 self-start border-2 border-[#e04c5e] [grid-area:1/1]">
        <CalcWindow welfareCost="2,116,800" />
      </section>
      <p className="absolute top-[90px] left-[711px] h-[126px] w-[304px] bg-[#e0e0e2]/90 pl-2 text-[48px] leading-[50px] font-medium whitespace-nowrap text-[#e00c0c]">
        <span className="block h-16">積算後</span>
        <span className="block">経費計算実行</span>
      </p>
      <p className="absolute top-[875px] left-[238px] h-[251px] w-[662px] bg-[#e0e0e2]/90 pl-2 text-[48px] leading-[52px] font-medium whitespace-nowrap text-[#e00c0c]">
        <span className="block h-[63px]">経費計算結果画面で</span>
        <span className="block h-[63px]">
          「<span className="font-['Liberation_Sans',sans-serif]">●</span>法定福利費<span className="mx-[2px]">(</span>編集可<span className="mx-[2px]">)</span>」欄を
        </span>
        <span className="block h-[63px]">積算書に記載したい額に修正</span>
        <span className="block">した後「確定」</span>
      </p>
      <Annotations />
    </main>
  );
}
